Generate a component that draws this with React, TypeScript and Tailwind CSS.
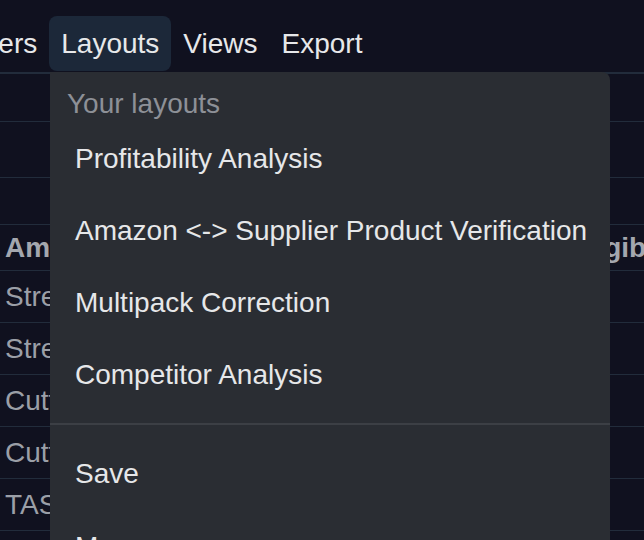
const font = { fontFamily: '"Liberation Sans", Arial, Helvetica, sans-serif' };

const navItems = ["Filters", "Layouts", "Views", "Export"];

const layouts = [
  "Profitability Analysis",
  "Amazon <-> Supplier Product Verification",
  "Multipack Correction",
  "Competitor Analysis",
];

const rows = [
  "Streamlight ProTac 2L-X",
  "Streamlight Stinger 2020",
  "Cuttlefish Bone Natural",
  "Cutter & Buck Polo Shirt",
  "TASCAM DR-05X Recorder",
];

export default function App() {
  return (
    <div className="relative w-[644px] h-[540px] overflow-hidden bg-[#10111f] text-[28px]" style={font}>
      {/* toolbar */}
      <div className="flex h-[74px] border-b-2 border-[#222c3b] ml-[-51px]">
        {navItems.map(item => (
          <div
            key={item}
            className={
              item === "Layouts"
                ? "mt-[16px] h-[55px] leading-[56px] px-3 rounded-lg bg-[#1c2839] text-[#e7e8ea] whitespace-nowrap"
                : "mt-[16px] h-[55px] leading-[56px] px-3 text-[#e7e8ea] whitespace-nowrap"
            }
          >
            {item}
          </div>
        ))}
      </div>

      {/* background table */}
      <div className="h-[48px] border-b border-[#222c3b]" />
      <div className="h-[56px] border-b border-[#222c3b]" />
      <div className="h-[47px] border-b border-[#222c3b]" />
      <div className="flex h-[46px] items-center border-b border-[#222c3b] font-bold text-[#a4a7ae] whitespace-nowrap">
        <span className="w-[570px] shrink-0 pl-[5px] overflow-hidden">Amazon Title</span>
        <span className="shrink-0">Eligible</span>
      </div>
      {rows.map(r => (
        <div key={r} className="flex h-[52px] items-center border-b border-[#222c3b] text-[#9b9fa7]">
          <span className="pl-[5px] whitespace-nowrap">{r}</span>
        </div>
      ))}

      {/* layouts dropdown */}
      <div className="absolute left-[50px] top-[72px] w-[560px] h-[520px] bg-[#2a2d33] rounded-tr-lg pt-[13px]">
        <div className="h-[38px] leading-[38px] pl-[17px] text-[#8d9097]">Your layouts</div>
        {layouts.map(l => (
          <div key={l} className="h-[72px] leading-[72px] pl-[25px] text-[#e6e7e9] whitespace-nowrap">
            {l}
          </div>
        ))}
        <div className="mt-[12px] mb-[13px] h-[2px] bg-[#3c3f45]" />
        <div className="h-[73px] leading-[72px] pl-[25px] text-[#e6e7e9]">Save</div>
        <div className="h-[72px] leading-[72px] pl-[25px] text-[#e6e7e9] whitespace-nowrap">Manage</div>
      </div>
    </div>
  );
}
